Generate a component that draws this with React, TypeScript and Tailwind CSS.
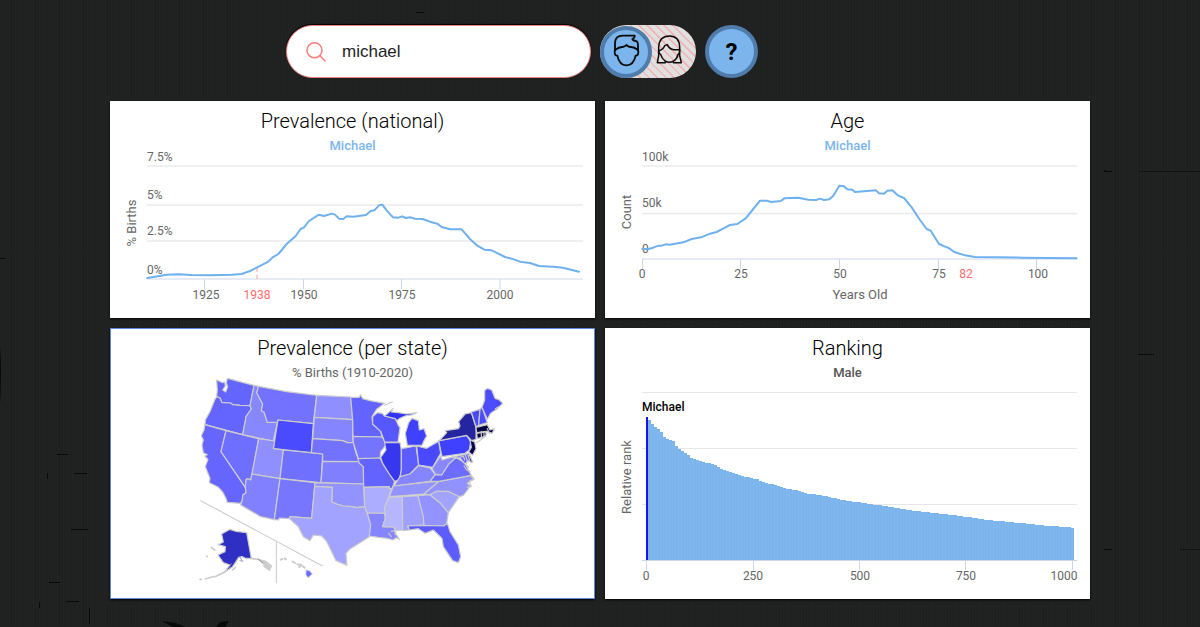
import { useState, type ReactNode } from "react";

type Point = [number, number];

const nationalLine: Point[] = [
  [127, 549], [150, 545], [185, 539], [220, 538], [260, 540], [315, 541], [380, 539], [410, 537], [435, 528], [455, 518],
  [490, 500], [502, 488], [520, 477], [545, 447], [572, 423], [587, 402], [597, 397], [612, 378], [642, 359], [657, 363],
  [680, 356], [690, 359], [702, 371], [715, 372], [725, 364], [745, 365], [783, 360], [797, 348], [808, 346], [822, 331],
  [832, 329], [845, 346], [864, 367], [880, 368], [892, 364], [902, 369], [915, 367], [930, 371], [953, 372], [975, 380],
  [997, 386], [1010, 396], [1035, 403], [1070, 403], [1095, 432], [1117, 452], [1138, 464], [1160, 466], [1200, 486],
  [1220, 491], [1245, 500], [1275, 504], [1302, 513], [1355, 516], [1377, 519], [1422, 530],
];

const ageLine: Point[] = [
  [127, 462], [145, 462], [160, 458], [175, 452], [185, 452], [197, 448], [210, 449], [250, 442], [275, 432], [303, 427],
  [330, 416], [350, 411], [375, 398], [390, 390], [412, 387], [437, 370], [455, 348], [480, 317], [500, 317], [515, 321],
  [542, 318], [553, 310], [595, 308], [625, 314], [648, 315], [660, 311], [672, 315], [688, 313], [700, 302], [718, 272],
  [732, 274], [742, 283], [757, 284], [765, 291], [828, 286], [837, 295], [852, 296], [862, 287], [877, 286], [895, 302],
  [912, 309], [935, 337], [960, 375], [980, 402], [992, 407], [1017, 447], [1048, 460], [1063, 471], [1095, 481],
  [1125, 486], [1265, 488], [1430, 490],
];

const rankCurve: Point[] = [
  [647, 417], [650, 421.7], [655, 426.7], [660.7, 431.7], [665, 438.7], [674, 441.3], [677.3, 448.3], [686, 453.3],
  [692.7, 459], [715, 465], [720, 468.3], [740, 475.7], [755, 478.7], [766.7, 483.3], [778.3, 485.7], [786.7, 488.7],
  [800, 491], [808, 493.7], [821.7, 495.3], [833, 498], [850, 501.3], [863, 503], [870, 504.3], [886.7, 506.3],
  [900, 508.7], [906.7, 510], [930, 512.7], [950, 514.7], [973, 517.7], [993, 520.7], [1006.7, 521.7], [1023, 523.3],
  [1040, 525.3], [1063, 526.7], [1071.7, 527.7], [1074, 528.5],
];

const toPoints = (pts: Point[]) => pts.map((p) => p.join(",")).join(" ");

function rankAt(x: number) {
  for (let i = 1; i < rankCurve.length; i++) {
    const [x0, y0] = rankCurve[i - 1];
    const [x1, y1] = rankCurve[i];
    if (x <= x1) return y0 + ((y1 - y0) * (x - x0)) / (x1 - x0);
  }
  return 528;
}

const rankBars = Array.from({ length: 142 }, (_, i) => {
  const x = 648 + i * 3;
  return { x, y: Math.round(rankAt(x + 1)) };
});

type State = { id: string; fill: string; d: string };

const westStates: State[] = [
  { id: "WA", fill: "#6464ff", d: "M80 30L98 38L104 36L106 48L98 60L107 66L113 50L109 40L112 25L192 46L180 107L150 106L128 104L122 99L96 98L90 84L80 80L82 60Z" },
  { id: "OR", fill: "#6464ff", d: "M80 80L90 84L96 98L122 99L128 104L150 106L180 107L184 117L168 140L166 152L158 194L45 164L46 150L60 125L74 90Z" },
  { id: "CA", fill: "#6666ff", d: "M45 164L108 182L93 245L166 352L168 368L158 376L157 390L152 400L112 397L108 385L98 366L85 352L72 345L58 338L60 325L46 290L54 268L44 258L52 254L40 248L36 225L40 210L34 197L42 180Z" },
  { id: "NV", fill: "#6e6eff", d: "M108 182L206 206L186 312L182 330L172 326L168 330L166 352L93 245Z" },
  { id: "ID", fill: "#8787ff", d: "M192 46L206 49L200 68L218 102L214 122L222 126L232 157L262 157L250 213L158 194L166 152L168 140L184 117L180 107Z" },
  { id: "MT", fill: "#7272ff", d: "M206 49L290 65L380 76L370 161L264 150L262 157L232 157L222 126L214 122L218 102L200 68Z" },
  { id: "WY", fill: "#4a4aff", d: "M264 150L370 161L364 248L250 236Z" },
  { id: "UT", fill: "#8f8fff", d: "M206 206L254 213L250 236L280 240L270 326L186 312Z" },
  { id: "CO", fill: "#7070ff", d: "M280 240L398 252L393 338L270 326Z" },
  { id: "AZ", fill: "#8181ff", d: "M186 312L270 326L253 449L212 440L152 405L157 390L158 376L168 368L166 352L168 330L172 326L182 330Z" },
  { id: "NM", fill: "#7676ff", d: "M270 326L375 338L365 445L300 440L298 446L268 444L266 450L253 449Z" },
  { id: "ND", fill: "#8f8fff", d: "M380 76L482 81L488 149L373 142Z" },
  { id: "SD", fill: "#8585ff", d: "M373 142L488 149L488 200L490 218L472 218L458 212L368 206Z" },
  { id: "NE", fill: "#7272ff", d: "M368 206L458 212L472 218L490 218L498 250L508 275L398 274L398 252L364 248Z" },
  { id: "KS", fill: "#7f7fff", d: "M398 274L508 275L520 285L521 342L393 338Z" },
  { id: "OK", fill: "#9393ff", d: "M375 338L521 342L524 410L500 413L485 410L460 408L440 402L425 396L427 352L374 349Z" },
  { id: "TX", fill: "#a2a2ff", d: "M374 349L427 352L425 396L440 402L460 408L485 410L500 413L524 410L532 430L542 465L538 500L510 518L480 537L468 550L471 586L438 572L425 545L410 515L395 498L370 495L360 512L340 500L325 470L298 446L300 440L365 445Z" },
  { id: "AK", fill: "#2f2fc4", d: "M95 492L120 478L138 484L170 488L184 566L165 564L156 560L146 562L138 575L128 590L102 608L120 585L112 582L100 578L84 555L105 545L106 530L84 524L100 516Z" },
];

const eastStates: State[] = [
  { id: "MN", fill: "#6363ff", d: "M2 82L28 82L32 74L38 86L60 92L104 100L80 118L66 140L68 162L92 184L96 201L9 199L8 149Z" },
  { id: "IA", fill: "#7474ff", d: "M9 199L96 201L110 222L92 245L90 264L26 268L10 218Z" },
  { id: "MO", fill: "#6363ff", d: "M24 266L90 264L98 280L118 312L134 334L126 356L116 356L118 350L41 352L40 290L28 280Z" },
  { id: "AR", fill: "#adadff", d: "M42 352L118 350L116 356L126 355L105 410L104 430L52 429L44 410Z" },
  { id: "LA", fill: "#8585ff", d: "M52 429L104 430L106 445L98 470L132 471L138 492L148 508L138 503L130 510L110 505L85 502L58 498L62 465Z" },
  { id: "WI", fill: "#5757ff", d: "M68 140L82 128L96 130L104 138L136 146L146 168L150 172L144 216L104 216L92 184L68 162Z" },
  { id: "MI-U", fill: "#3434f5", d: "M104 138L130 115L124 126L145 128L170 132L200 128L188 134L165 138L148 146L140 152L136 146Z" },
  { id: "MI", fill: "#4040ff", d: "M172 226L166 190L176 158L186 145L205 152L208 180L222 176L230 198L222 212L216 226Z" },
  { id: "IL", fill: "#3737f0", d: "M104 218L150 218L154 240L154 300L148 330L134 334L118 312L98 280L92 262L108 240Z" },
  { id: "IN", fill: "#5c5cff", d: "M154 236L198 228L206 285L180 312L150 322L154 300Z" },
  { id: "OH", fill: "#4949ff", d: "M200 228L230 235L266 214L272 250L248 292L206 285Z" },
  { id: "KY", fill: "#8585ff", d: "M132 348L150 320L180 312L206 287L240 294L256 314L240 334Z" },
  { id: "TN", fill: "#9393ff", d: "M118 380L130 348L240 336L267 334L222 372Z" },
  { id: "MS", fill: "#b6b6ff", d: "M118 382L157 380L158 480L138 482L132 471L98 470L106 445L104 410Z" },
  { id: "AL", fill: "#9f9fff", d: "M157 380L204 377L222 440L220 465L172 468L178 480L158 482Z" },
  { id: "GA", fill: "#9393ff", d: "M204 377L240 374L270 398L295 428L290 460L282 468L222 466L220 440Z" },
  { id: "FL", fill: "#5c5cff", d: "M174 468L222 466L282 468L292 460L300 485L325 525L332 560L325 578L308 572L280 530L276 505L250 480L225 490L205 476L178 480Z" },
  { id: "SC", fill: "#a2a2ff", d: "M240 374L260 363L295 364L328 380L295 428L270 398Z" },
  { id: "NC", fill: "#9191ff", d: "M222 372L267 334L362 316L372 328L352 340L362 348L340 376L328 380L295 364L260 363L240 374Z" },
  { id: "VA", fill: "#6c6cff", d: "M240 334L256 314L275 315L296 282L318 262L345 280L355 300L364 316L267 334Z" },
  { id: "WV", fill: "#8787ff", d: "M246 296L272 258L276 270L310 260L314 266L296 282L275 315L256 312Z" },
  { id: "MD", fill: "#6060ff", d: "M306 262L358 250L366 278L355 272L345 282L330 264Z" },
  { id: "PA", fill: "#4040ff", d: "M266 212L350 196L362 215L358 240L345 250L276 260Z" },
  { id: "NY", fill: "#2525a2", d: "M268 212L290 188L286 182L325 176L330 168L326 155L345 132L364 128L378 172L378 208L365 212L350 196Z" },
  { id: "NJ", fill: "#050550", d: "M360 210L374 216L378 236L368 256L356 246L364 232Z" },
  { id: "DE", fill: "#08086e", d: "M354 256L358 256L368 276L361 276Z" },
  { id: "VT", fill: "#4848ff", d: "M364 126L390 118L386 166L378 170Z" },
  { id: "NH", fill: "#4c4cff", d: "M390 118L396 112L412 158L386 166Z" },
  { id: "ME", fill: "#4c4cff", d: "M396 112L404 90L404 62L412 55L425 60L435 85L448 90L458 100L440 118L422 130L412 148Z" },
  { id: "MA", fill: "#050540", d: "M378 172L412 164L420 180L434 176L426 190L410 184L380 188Z" },
  { id: "CT", fill: "#050540", d: "M380 190L408 186L408 198L382 206Z" },
];

function Card({
  title,
  subtitle,
  subtitleClass,
  className = "",
  children,
}: {
  title: string;
  subtitle: string;
  subtitleClass: string;
  className?: string;
  children: ReactNode;
}) {
  return (
    <section className={`bg-white pt-2 text-center shadow-[0_1px_2px_#000000] ${className}`}>
      <h2 className="text-[20px] leading-6 font-light text-black">{title}</h2>
      <p className={`mt-[5px] text-[13px] leading-4 ${subtitleClass}`}>{subtitle}</p>
      {children}
    </section>
  );
}

function Label({
  x,
  y,
  anchor = "middle",
  fill = "#666666",
  size = 12,
  children,
}: {
  x: number;
  y: number;
  anchor?: "start" | "middle" | "end";
  fill?: string;
  size?: number;
  children: ReactNode;
}) {
  return (
    <text x={x} y={y} fontSize={size} textAnchor={anchor} fill={fill}>
      {children}
    </text>
  );
}

function AxisTitle({ x, y, children }: { x: number; y: number; children: ReactNode }) {
  return (
    <text transform={`translate(${x} ${y}) rotate(-90)`} fontSize={13} textAnchor="middle" fill="#666666">
      {children}
    </text>
  );
}

function NationalChart() {
  return (
    <svg viewBox="110 154 485 164" className="block w-full overflow-visible" role="img" aria-label="Percentage of births by year">
      <path d="M147 166H583M147 205H583M147 241H583" stroke="#ebebeb" strokeWidth="1.3" />
      <path d="M147 279H583M204.500 279V289M303.500 279V289M401.500 279V289M500 279V289" stroke="#ccd6eb" fill="none" />
      <path d="M257 268V279" stroke="#ff9e9e" strokeDasharray="4 3" />
      <polyline points={toPoints(nationalLine)} transform="translate(105 95) scale(0.33333)" fill="none" stroke="#6fb0ee" strokeWidth="6" strokeLinejoin="round" strokeLinecap="round" />
      <Label x={147} y={161} anchor="start">7.5%</Label>
      <Label x={147} y={199} anchor="start">5%</Label>
      <Label x={147} y={235} anchor="start">2.5%</Label>
      <Label x={147} y={274} anchor="start">0%</Label>
      <Label x={206} y={299}>1925</Label>
      <Label x={257} y={299} fill="#ff6b6b">1938</Label>
      <Label x={304} y={299}>1950</Label>
      <Label x={402} y={299}>1975</Label>
      <Label x={500} y={299}>2000</Label>
      <AxisTitle x={136} y={223}>% Births</AxisTitle>
    </svg>
  );
}

function AgeChart() {
  return (
    <svg viewBox="605 154 485 164" className="block w-full overflow-visible" role="img" aria-label="Count by age">
      <path d="M642 166H1077M642 213.500H1077" stroke="#ebebeb" strokeWidth="1.3" />
      <path d="M642 259H1077M642.500 259V269M740.500 259V269M839.500 259V269M938.500 259V269M1036.500 259V269" stroke="#ccd6eb" fill="none" />
      <Label x={642} y={161} anchor="start">100k</Label>
      <Label x={642} y={207} anchor="start">50k</Label>
      <Label x={642} y={253} anchor="start">0</Label>
      <polyline points={toPoints(ageLine)} transform="translate(600 95) scale(0.33333)" fill="none" stroke="#6fb0ee" strokeWidth="6" strokeLinejoin="round" strokeLinecap="round" />
      <Label x={642} y={278}>0</Label>
      <Label x={741} y={278}>25</Label>
      <Label x={840} y={278}>50</Label>
      <Label x={939} y={278}>75</Label>
      <Label x={966} y={278} fill="#ff6b6b">82</Label>
      <Label x={1038} y={278}>100</Label>
      <Label x={860} y={299} size={13}>Years Old</Label>
      <AxisTitle x={631} y={212}>Count</AxisTitle>
    </svg>
  );
}

function StateMap() {
  return (
    <svg viewBox="110 381 485 218" className="block w-full overflow-visible" role="img" aria-label="Percentage of births per state">
      <g transform="translate(190 370) scale(0.33333)" stroke="#cccccc" strokeWidth="3.600" strokeLinejoin="round" strokeLinecap="round">
        {westStates.map((s) => (
          <path key={s.id} d={s.d} fill={s.fill} />
        ))}
        <path d="M32 392L396 587M259 516V638" fill="none" strokeWidth="3.200" />
        <path d="M30 628H34M46 627L66 621L78 619L92 612L104 606M64 532L74 540M50 558L52 560M128 600L136 592M186 566L206 568L218 578L240 594M210 570L226 574L244 588L238 600L222 588" fill="none" strokeWidth="5" />
        <path d="M212 572L226 578L242 592L236 596L224 586Z" fill="#cccccc" />
        <path d="M150 562L158 574L150 572M124 580L118 592M205 568L218 578" fill="none" stroke="#8888bb" strokeWidth="2.500" />
        <path d="M272 569L277 567M284 565L288 568M308 575L315 579M322 583L334 585M328 591L330 590M338 589L344 593" fill="none" strokeWidth="6" />
        <path d="M349 600L358 602L367 612L354 623L348 614Z" fill="#6c6cff" strokeWidth="2.500" />
      </g>
      <g transform="translate(350 370) scale(0.33333)" stroke="#cccccc" strokeWidth="3.600" strokeLinejoin="round" strokeLinecap="round">
        {eastStates.map((s) => (
          <path key={s.id} d={s.d} fill={s.fill} />
        ))}
        <path d="M378 218L392 210L406 198M118 98L128 96M104 106L120 98M394 184V204M402 184V202M330 262L340 258L344 270M346 256L352 272L348 284L356 292M342 288L350 300L360 304M362 316L372 326L358 334L364 350L352 352M124 484L134 482L136 494M116 490L124 500M412 176L418 190M436 116L446 110" fill="none" />
      </g>
    </svg>
  );
}

function RankingChart() {
  return (
    <svg viewBox="605 381 485 218" className="block w-full overflow-visible" role="img" aria-label="Relative rank of names">
      <path d="M642 392.500H1077M642 448.500H1077M642 504.500H1077" stroke="#e6e6e6" />
      <g fill="#7cb5ec">
        {rankBars.map((b) => (
          <rect key={b.x} x={b.x} y={b.y} width={3} height={560 - b.y} />
        ))}
      </g>
      <path d={rankBars.map((b) => `M${b.x + 0.5} ${b.y + 1}V560`).join("")} stroke="#88bbee" strokeOpacity="0.4" />
      <rect x={646} y={417} width={2} height={143} fill="#1414f0" />
      <path d="M642 560.500H1077M646.500 560V570M753.500 560V570M859.500 560V570M965.500 560V570M1072.500 560V570" stroke="#ccd6eb" fill="none" />
      <text x={642} y={411} fontSize={12} fontWeight={500} fill="#000000">Michael</text>
      <Label x={646} y={580}>0</Label>
      <Label x={753} y={580}>250</Label>
      <Label x={860} y={580}>500</Label>
      <Label x={966} y={580}>750</Label>
      <Label x={1064} y={580}>1000</Label>
      <AxisTitle x={631} y={477}>Relative rank</AxisTitle>
    </svg>
  );
}

function Backdrop() {
  return (
    <svg className="pointer-events-none absolute inset-0 h-full w-full" viewBox="0 0 1200 627" preserveAspectRatio="xMidYMid slice" aria-hidden="true">
      <path
        d="M416 12.500H424M1104 171.500H1112M1138 354.500H1154M1104 549.500H1112M57 454.500H68M74 473.500H87M47.500 473V479M71 529.500H88M49 582.500H60M66 601.500H79M39.500 602V608M89.500 608V624M0 258.500H5"
        stroke="#080909"
        fill="none"
      />
      <path d="M1138 171.500H1200M1180 549.500H1200" stroke="#080909" strokeOpacity="0.6" fill="none" />
      <path d="M162 621L176 623Q184 626 187 628H174ZM216 627L220 622L229 621Q226 625 225 628H214ZM0 345Q2 370 0 405ZM1104 170L1109 171.500L1104 172Z" fill="#080909" />
    </svg>
  );
}

export default function App() {
  const [query, setQuery] = useState("michael");
  const [male, setMale] = useState(true);

  return (
    <div className="relative min-h-screen overflow-hidden bg-[#1f2120] bg-[repeating-linear-gradient(90deg,rgba(255,255,255,0.012)_0px,rgba(255,255,255,0.012)_1px,transparent_1px,transparent_3px)] font-['Roboto',sans-serif]">
      <Backdrop />
      <div className="relative mx-auto max-w-[980px] pt-[25px] pb-7">
        <header className="flex items-center gap-[9px] pl-44">
          <label className="flex h-[53px] w-[305px] items-center rounded-full border border-[#f08080] bg-white pl-[19px] shadow-[0_-1px_1px_#000000]">
            <svg viewBox="0 0 20 20" className="size-5 shrink-0" fill="none" stroke="#ff7b7b" strokeWidth="1.500" strokeLinecap="round" aria-hidden="true">
              <circle cx="8.500" cy="8.300" r="7.500" />
              <path d="M14 13.800L19 19" />
            </svg>
            <input
              aria-label="Name"
              value={query}
              onChange={(e) => setQuery(e.target.value)}
              className="ml-4 w-52 bg-transparent font-['Liberation_Sans',Arial,sans-serif] text-[17px] text-[#222222] outline-none"
            />
          </label>

          <button
            type="button"
            role="switch"
            aria-checked={male}
            aria-label="Male names"
            onClick={() => setMale(!male)}
            className="flex h-[53px] w-24 items-center rounded-full bg-[repeating-linear-gradient(45deg,#e0e0e0_0px,#e0e0e0_4px,#f2b4b4_4px,#f2b4b4_5px,#e0e0e0_6px)]"
          >
            <span className="flex size-[52px] items-center justify-center rounded-full border-4 border-[#4f7cab] bg-[#7cb5ec]">
              <svg viewBox="51 48 81 99" className="mb-0.5 h-[33px] w-[27px]" fill="none" stroke="#0a0a0a" strokeWidth="5.500" strokeLinejoin="round" strokeLinecap="round" aria-hidden="true">
                <path d="M57 96V74Q58 53 80 53H116Q117 60 109 63Q112 69 118 68Q126 70 126 82V96" />
                <path d="M57 96Q70 86 80 87Q87 86 91 81Q96 86 103 87Q114 86 126 96" />
                <path d="M57 96Q54 109 60 112L64 113Q70 142 91 142Q113 142 119 113L123 112Q129 109 126 96" />
              </svg>
            </span>
            <svg viewBox="182 50 81 87" className="mb-1 ml-1 h-[29px] w-[27px]" fill="none" stroke="#0a0a0a" strokeWidth="4.500" strokeLinejoin="round" strokeLinecap="round" aria-hidden="true">
              <path d="M190 112V86Q192 53 222 53Q252 53 253 86V112L258 133H234M190 112L186 133H210" />
              <path d="M190 97Q203 94 208 82L216 79Q222 93 236 94L253 94" />
              <path d="M190 97Q191 106 196 108Q199 120 209 128Q222 136 235 128Q246 120 248 108Q253 106 253 97" />
            </svg>
          </button>

          <button
            type="button"
            aria-label="Help"
            className="flex size-[53px] items-center justify-center rounded-full border-4 border-[#4f7cab] bg-[#7cb5ec] text-[24px] leading-none font-bold text-black"
          >
            ?
          </button>
        </header>

        <main className="mt-[23px] grid grid-cols-2 gap-[10px]">
          <Card title="Prevalence (national)" subtitle="Michael" subtitleClass="font-medium text-[#7cb5ec]">
            <NationalChart />
          </Card>
          <Card title="Age" subtitle="Michael" subtitleClass="font-medium text-[#7cb5ec]">
            <AgeChart />
          </Card>
          <Card
            title="Prevalence (per state)"
            subtitle="% Births (1910-2020)"
            subtitleClass="text-[#666666]"
            className="inset-ring-1 inset-ring-[#5f86d8]"
          >
            <StateMap />
          </Card>
          <Card title="Ranking" subtitle="Male" subtitleClass="font-medium text-[#555555]">
            <RankingChart />
          </Card>
        </main>
      </div>
    </div>
  );
}
